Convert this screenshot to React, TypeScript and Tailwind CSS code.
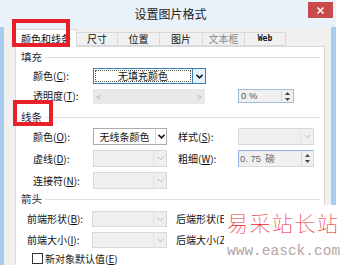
import React from "react";

const Chevron = ({ dark = false }: { dark?: boolean }) => (
  <svg width="7" height="5" viewBox="0 0 7 5" className="block">
    <polyline
      points="0.5,0.8 3.5,3.8 6.5,0.8"
      fill="none"
      stroke={dark ? "#1a1a1a" : "#b9b9b9"}
      strokeWidth={dark ? 1.6 : 1}
    />
  </svg>
);

const SpinArrows = () => (
  <div className="flex flex-col items-center justify-center w-[12px] h-full border-l border-[#d5d5d5] gap-[3px]">
    <svg width="5" height="3" viewBox="0 0 5 3" className="block">
      <polygon points="2.5,0 5,3 0,3" fill="#444" />
    </svg>
    <svg width="5" height="3" viewBox="0 0 5 3" className="block">
      <polygon points="0,0 5,0 2.5,3" fill="#444" />
    </svg>
  </div>
);

const DisabledSelect = ({ w }: { w: string }) => (
  <div className={`flex h-full ${w} border border-[#d9d9d9] bg-[#efefef]`}>
    <div className="flex-1" />
    <div className="w-[13px] flex items-center justify-center border-l border-[#e2e2e2]">
      <Chevron />
    </div>
  </div>
);

const L = ({ t, k }: { t: string; k: string }) => (
  <span className="whitespace-nowrap">
    {t}(<u>{k}</u>):
  </span>
);

const Heading = ({ t }: { t: string }) => (
  <div className="flex items-center h-[14px] pl-[5px] pr-[4px] gap-[3px]">
    <span className="text-[10.5px] text-[#1c2540]">{t}</span>
    <div className="flex-1 h-px bg-[#dedede]" />
  </div>
);

export default function App() {
  return (
    <div className="relative w-[343px] h-[265px] overflow-hidden bg-white font-['Noto_Sans_CJK_SC',sans-serif] text-[10px] leading-none text-[#111]">
      {/* window */}
      <div className="flex flex-col w-[336px] h-[280px] bg-[#a9cdf0]">
        {/* title bar */}
        <div className="relative h-[27px] flex items-center justify-center bg-[#e9f1fa]">
          <span className="text-[12px] text-[#222] pl-[5px]">设置图片格式</span>
          <div className="absolute left-[308px] top-[2px] w-[25px] h-[16px] bg-[#c94a4a] flex items-center justify-center">
            <svg width="7" height="7" viewBox="0 0 7 7">
              <path d="M0.5 0.5 L6.5 6.5 M6.5 0.5 L0.5 6.5" stroke="#fff" strokeWidth="1.5" />
            </svg>
          </div>
        </div>
        {/* body */}
        <div className="flex-1 flex flex-col ml-[4px] mr-[5px] bg-[#f0f0f0] pl-[11px] pr-[6px] pt-[2px]">
          {/* tabs */}
          <div className="flex items-end h-[17px] text-[10px]">
            <div className="w-[62px] h-[18px] -mb-px relative z-10 bg-white border border-b-0 border-[#d9d9d9] flex items-center justify-center">
              颜色和线条
            </div>
            <div className="w-[41px] h-[14px] bg-[#f0f0f0] border border-l-0 border-[#d9d9d9] flex items-center justify-center">
              尺寸
            </div>
            <div className="w-[42px] h-[14px] bg-[#f0f0f0] border border-l-0 border-[#d9d9d9] flex items-center justify-center">
              位置
            </div>
            <div className="w-[43px] h-[14px] bg-[#f0f0f0] border border-l-0 border-[#d9d9d9] flex items-center justify-center">
              图片
            </div>
            <div className="w-[42px] h-[14px] bg-[#f0f0f0] border border-l-0 border-[#d9d9d9] flex items-center justify-center text-[#8a8a8a]">
              文本框
            </div>
            <div className="w-[41px] h-[14px] bg-[#f0f0f0] border border-l-0 border-[#d9d9d9] flex items-center justify-center font-['DejaVu_Sans_Mono',monospace] font-bold text-[8px]">
              Web
            </div>
          </div>
          {/* page */}
          <div className="flex-1 bg-white border border-[#d9d9d9] flex flex-col pt-[3px]">
            <Heading t="填充" />
            {/* fill color */}
            <div className="flex items-center h-[16px] mt-[4px]">
              <div className="w-[77px] pl-[17px]"><L t="颜色" k="C" /></div>
              <div className="flex h-full w-[113px]">
                <div className="flex-1 border border-[#3c7fb1] bg-white p-[1px]">
                  <div className="h-full border border-dotted border-[#555] flex items-center justify-center">
                    无填充颜色
                  </div>
                </div>
                <div className="w-[13px] border border-l-0 border-[#3c7fb1] bg-[#e5f1fb] flex items-center justify-center">
                  <Chevron dark />
                </div>
              </div>
            </div>
            {/* transparency */}
            <div className="flex items-center h-[16px] mt-[4px]">
              <div className="w-[77px] pl-[17px]"><L t="透明度" k="T" /></div>
              <div className="flex items-center justify-between h-[15px] w-[112px] bg-[#e8e8e8] px-[3px] text-[#b5b5b5] text-[9px]">
                <span>&lt;</span>
                <span>&gt;</span>
              </div>
              <div className="ml-[33px] flex h-[14px] w-[56px] border border-[#a6bbd6] bg-[#f0f0f0]">
                <div className="flex-1 flex items-center pl-[2px] font-['Liberation_Sans',sans-serif] text-[9.5px] text-[#555]">0 %</div>
                <SpinArrows />
              </div>
            </div>
            <div className="mt-[6px]">
              <Heading t="线条" />
            </div>
            {/* line color */}
            <div className="flex items-center h-[17px] mt-[4px]">
              <div className="w-[77px] pl-[17px]"><L t="颜色" k="O" /></div>
              <div className="flex h-full w-[74px] border border-[#acacac] bg-white">
                <div className="flex-1 flex items-center justify-center">无线条颜色</div>
                <div className="w-[11px] border-l border-[#d6d6d6] flex items-center justify-center">
                  <Chevron dark />
                </div>
              </div>
              <div className="w-[71px] pl-[11px]"><L t="样式" k="S" /></div>
              <DisabledSelect w="w-[76px]" />
            </div>
            {/* dash */}
            <div className="flex items-center h-[17px] mt-[5px]">
              <div className="w-[77px] pl-[17px]"><L t="虚线" k="D" /></div>
              <DisabledSelect w="w-[74px]" />
              <div className="w-[71px] pl-[11px]"><L t="粗细" k="W" /></div>
              <div className="flex h-full w-[76px] border border-[#d9d9d9] border-t-[#8db2e3] border-l-[#8db2e3] bg-[#f0f0f0]">
                <div className="flex-1 flex items-center pl-[1px] text-[9.5px] text-[#666] gap-[4px]">
                  <span className="font-['Liberation_Sans',sans-serif]">0. 75</span>
                  <span>磅</span>
                </div>
                <SpinArrows />
              </div>
            </div>
            {/* connector */}
            <div className="flex items-center h-[17px] mt-[5px]">
              <div className="w-[77px] pl-[17px]"><L t="连接符" k="N" /></div>
              <DisabledSelect w="w-[74px]" />
            </div>
            <div className="mt-[3px]">
              <Heading t="箭头" />
            </div>
            {/* begin style */}
            <div className="flex items-center h-[16px] mt-[5px]">
              <div className="w-[76px] pl-[11px]"><L t="前端形状" k="B" /></div>
              <DisabledSelect w="w-[75px]" />
              <div className="w-[57px] pl-[9px] overflow-hidden"><L t="后端形状" k="E" /></div>
            </div>
            {/* begin size */}
            <div className="flex items-center h-[16px] mt-[5px]">
              <div className="w-[76px] pl-[11px]"><L t="前端大小" k="I" /></div>
              <DisabledSelect w="w-[75px]" />
              <div className="w-[57px] pl-[9px] overflow-hidden"><L t="后端大小" k="Z" /></div>
            </div>
            {/* checkbox */}
            <div className="flex items-center h-[11px] mt-[5px] pl-[16px] gap-[2px]">
              <div className="w-[11px] h-[11px] border border-[#333] bg-white" />
              <span>新对象默认值(<u>E</u>)</span>
            </div>
          </div>
        </div>
      </div>

      {/* red annotation boxes */}
      <div className="absolute z-20 left-[12px] top-[19px] w-[58px] h-[28px] border-[4px] border-[#e8202a]" />
      <div className="absolute z-20 left-[13px] top-[100px] w-[40px] h-[26px] border-[4px] border-[#e8202a]" />

      {/* watermark */}
      <div className="absolute z-20 left-[224px] top-[205px] right-0 bottom-0 bg-white flex flex-col pl-[3px] pt-[7px]">
        <div className="text-[21px] text-[#ee1c2a] tracking-[1.5px] font-['Noto_Sans_CJK_SC',serif] font-thin leading-none">
          易采站长站
        </div>
        <div className="mt-[11px] font-['Liberation_Mono',monospace] text-[14.5px] text-[#b5a5a5] leading-none">
          www.easck.com
        </div>
      </div>
    </div>
  );
}
